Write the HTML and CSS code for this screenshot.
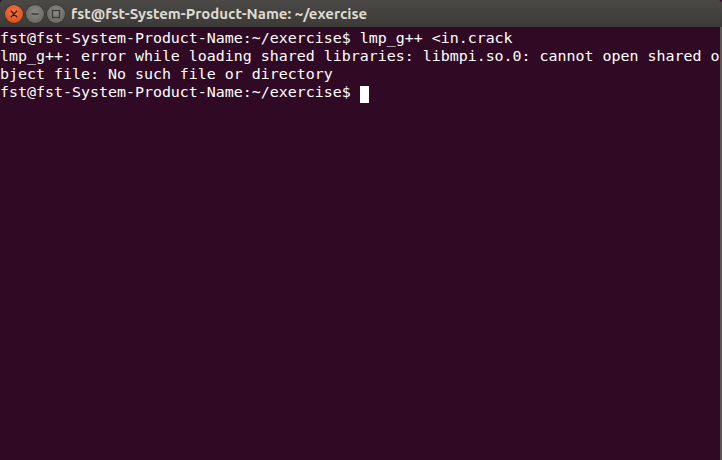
FILE: index.html
```html
<!DOCTYPE html>
<html>
<head>
<meta charset="utf-8">
<link rel="stylesheet" href="styles.css">
</head>
<body>
<div class="window">
  <div class="titlebar">
    <div class="buttons">
      <span class="btn close">
        <svg width="18" height="18" viewBox="0 0 18 18"><path d="M6.3 6.3 L11.7 11.7 M11.7 6.3 L6.3 11.7" stroke="#3a1a10" stroke-width="1.4" stroke-linecap="round"/></svg>
      </span>
      <span class="btn min">
        <svg width="18" height="18" viewBox="0 0 18 18"><path d="M5.5 9 H12.5" stroke="#3c3b37" stroke-width="1.5"/></svg>
      </span>
      <span class="btn max">
        <svg width="18" height="18" viewBox="0 0 18 18"><rect x="5.5" y="5.5" width="7" height="7" fill="none" stroke="#3c3b37" stroke-width="1.3"/></svg>
      </span>
    </div>
    <div class="title">fst@fst-System-Product-Name: ~/exercise</div>
  </div>
  <div class="terminal">
    <div class="line">fst@fst-System-Product-Name:~/exercise$ lmp_g++ &lt;in.crack</div>
    <div class="line">lmp_g++: error while loading shared libraries: libmpi.so.0: cannot open shared o</div>
    <div class="line">bject file: No such file or directory</div>
    <div class="line">fst@fst-System-Product-Name:~/exercise$ <span class="cursor">&nbsp;</span></div>
  </div>
</div>
</body>
</html>
```
FILE: styles.css
```css
html, body {
  margin: 0;
  padding: 0;
  background: #300a24;
}
.window {
  width: 722px;
  height: 460px;
  display: flex;
  flex-direction: column;
  overflow: hidden;
}
.titlebar {
  height: 27px;
  flex: none;
  background: linear-gradient(#4a4945, #3c3b37);
  display: flex;
  align-items: center;
  border-radius: 4px 4px 0 0;
}
.buttons {
  display: flex;
  gap: 3px;
  padding-left: 5px;
}
.btn {
  width: 18px;
  height: 18px;
  border-radius: 50%;
  display: flex;
  align-items: center;
  justify-content: center;
}
.btn svg { display: block; }
.close {
  background: radial-gradient(circle at 50% 40%, #f47a4a, #e0501f 70%, #c8441a);
  box-shadow: 0 0 0 0.5px #2f2e2b;
}
.min, .max {
  background: radial-gradient(circle at 50% 40%, #8a8984, #6d6c67 70%, #5c5b57);
  box-shadow: 0 0 0 0.5px #2f2e2b;
}
.title {
  margin-left: 6px;
  font-family: Ubuntu, "Open Sans", "DejaVu Sans", sans-serif;
  font-weight: bold;
  font-size: 15px;
  color: #dfdbd2;
}
.terminal {
  flex: 1;
  background: #300a24;
  border-right: 2px solid #5a5856;
  padding: 2px 0 0 0;
  font-family: "DejaVu Sans Mono", monospace;
  font-size: 14.95px;
  line-height: 18px;
  color: #ffffff;
  overflow: hidden;
}
.line {
  height: 18px;
  white-space: pre;
}
.cursor {
  display: inline-block;
  width: 9px;
  height: 17px;
  background: #ffffff;
  vertical-align: -3px;
}
```
